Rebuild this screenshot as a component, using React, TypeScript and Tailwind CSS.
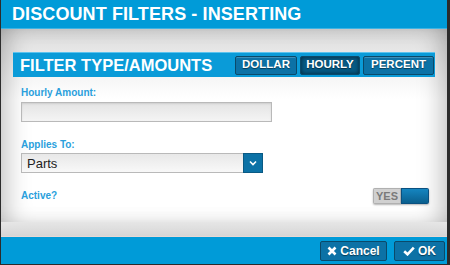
import React from "react";

const font = { fontFamily: '"Liberation Sans", Arial, sans-serif' };

function TypeButton({ label, active }: { label: string; active?: boolean }) {
  return (
    <div
      className={
        "h-[19px] flex items-center justify-center text-[11.5px] font-bold text-white border border-[#0a4a6a] rounded-[2px] " +
        (active
          ? "bg-[#075a84] shadow-[inset_0_0_4px_rgba(0,0,0,0.6)]"
          : "bg-[#0c72a6] shadow-[inset_0_1px_0_rgba(255,255,255,0.2)]")
      }
      style={{ textShadow: "0 1px 1px rgba(0,0,0,0.5)" }}
    >
      {label}
    </div>
  );
}

export default function App() {
  return (
    <div
      className="w-[450px] h-[265px] flex flex-col bg-[#2b2b2b] pl-px pr-[3px] pb-px overflow-hidden"
      style={font}
    >
      {/* Title bar */}
      <div className="h-[29px] bg-[#009bd8] border-b border-[#3fb3e3] flex items-center pl-[11px] shrink-0">
        <span className="text-white font-bold text-[18px] leading-none tracking-[0.1px]">
          DISCOUNT FILTERS - INSERTING
        </span>
      </div>

      {/* Body */}
      <div className="relative flex-1 bg-white bg-[linear-gradient(to_bottom,#dadada_0px,#f2f2f2_40px,#ffffff_70px)]">
        <div className="absolute inset-0 pointer-events-none shadow-[inset_16px_0_26px_-12px_rgba(0,0,0,0.28),inset_-16px_0_26px_-12px_rgba(0,0,0,0.28)]" />
        <div className="relative flex flex-col pl-[12px] pr-[12px] pt-[23px]">
          {/* Section header */}
          <div className="h-[25px] bg-[#0a9bd8] border-t border-[#5cc3ee] flex items-center pl-[7px] pr-[1px]">
            <span className="text-white font-bold text-[16.5px] leading-none flex-1">
              FILTER TYPE/AMOUNTS
            </span>
            <div className="flex gap-[3px]">
              <div className="w-[62px]"><TypeButton label="DOLLAR" /></div>
              <div className="w-[60px]"><TypeButton label="HOURLY" active /></div>
              <div className="w-[71px]"><TypeButton label="PERCENT" /></div>
            </div>
          </div>

          {/* Hourly amount */}
          <div className="pl-[8px] pt-[10px] flex flex-col">
            <span className="text-[#2a9fdc] font-bold text-[10px] leading-[12px]">
              Hourly Amount:
            </span>
            <div className="mt-[3px] w-[251px] h-[20px] border border-[#b9b9b9] bg-[linear-gradient(to_bottom,#e4e4e4,#f4f4f4)] shadow-[inset_0_1px_2px_rgba(0,0,0,0.1)]" />

            <span className="mt-[17px] text-[#2a9fdc] font-bold text-[10px] leading-[12px]">
              Applies To:
            </span>
            <div className="mt-[2px] w-[242px] h-[20px] border border-[#b9b9b9] bg-[linear-gradient(to_bottom,#e8e8e8,#f8f8f8)] flex items-center">
              <span className="flex-1 pl-[5px] text-[13px] text-[#222] leading-none">Parts</span>
              <div className="w-[20px] h-[20px] -mr-px bg-[#0c72a6] border border-[#0a5a84] flex items-center justify-center">
                <svg width="8" height="6" viewBox="0 0 8 6">
                  <path d="M1 1.5 L4 4.5 L7 1.5" stroke="white" strokeWidth="1.6" fill="none" />
                </svg>
              </div>
            </div>

            <div className="mt-[15px] flex items-center">
              <span className="flex-1 text-[#2a9fdc] font-bold text-[10px] leading-[12px]">
                Active?
              </span>
              <div className="mr-[6px] flex h-[16px] w-[56px] rounded-[2px] overflow-hidden shadow-[0_1px_2px_rgba(0,0,0,0.3)]">
                <div className="w-[28px] bg-[#d0d0d0] flex items-center justify-center text-[#7a7a7a] font-bold text-[11px] border border-[#b0b0b0]">
                  YES
                </div>
                <div className="flex-1 bg-[linear-gradient(to_bottom,#1585c0,#0a5f8e)] border border-[#0a5080]" />
              </div>
            </div>
          </div>
        </div>
      </div>

      {/* Footer gray band */}
      <div className="h-[15px] shrink-0 bg-[linear-gradient(to_bottom,#e6e6e6,#d6d6d6)] border-b border-[#e8d8d4]" />

      {/* Footer */}
      <div className="h-[27px] shrink-0 bg-[#009bd8] flex items-center justify-end gap-[7px] pr-[2px]">
        <div
          className="h-[20px] w-[67px] flex items-center justify-center gap-[3px] bg-[#0c72a6] border border-[#0a4a6a] rounded-[2px] text-white font-bold text-[12px]"
          style={{ textShadow: "0 1px 1px rgba(0,0,0,0.5)" }}
        >
          <svg width="10" height="10" viewBox="0 0 10 10">
            <path d="M1.5 1.5 L8.5 8.5 M8.5 1.5 L1.5 8.5" stroke="white" strokeWidth="2.6" strokeLinecap="butt" />
          </svg>
          Cancel
        </div>
        <div
          className="h-[20px] w-[51px] flex items-center justify-center gap-[3px] bg-[#0c72a6] border border-[#0a4a6a] rounded-[2px] text-white font-bold text-[12px]"
          style={{ textShadow: "0 1px 1px rgba(0,0,0,0.5)" }}
        >
          <svg width="12" height="10" viewBox="0 0 12 10">
            <path d="M1.2 5.2 L4.5 8.3 L10.8 1.6" stroke="white" strokeWidth="2.6" fill="none" />
          </svg>
          OK
        </div>
      </div>
    </div>
  );
}
